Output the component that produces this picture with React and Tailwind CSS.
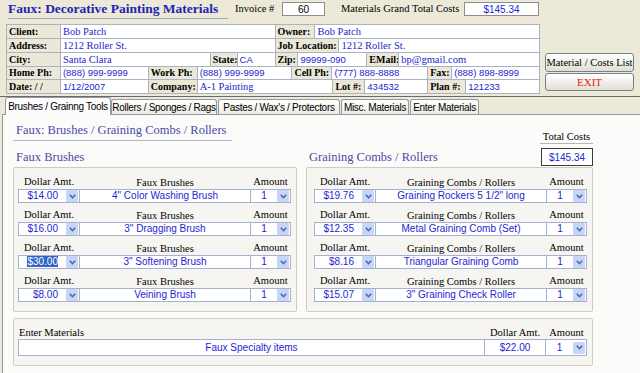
const SERIF = "font-['Liberation_Serif','Times_New_Roman',serif]";
const SANS = "font-['Liberation_Sans',Arial,sans-serif]";

const header = [
  [
    ["Client:", 54, "l"],
    ["Bob Patch", 215, "s"],
    ["Owner:", 40, "l"],
    ["Bob Patch", 225, "s"],
  ],
  [
    ["Address:", 54, "l"],
    ["1212 Roller St.", 215, "s"],
    ["Job Location:", 64, "l"],
    ["1212 Roller St.", 201, "s"],
  ],
  [
    ["City:", 54, "l"],
    ["Santa Clara", 150, "s"],
    ["State:", 27, "l"],
    ["CA", 38, "n"],
    ["Zip:", 23, "l"],
    ["99999-090", 69, "n"],
    ["EMail:", 32, "l"],
    ["bp@gmail.com", 141, "s"],
  ],
  [
    ["Home Ph:", 54, "l"],
    ["(888) 999-9999", 88, "n"],
    ["Work Ph:", 49, "l"],
    ["(888) 999-9999", 95, "n"],
    ["Cell Ph:", 40, "l"],
    ["(777) 888-8888", 96, "n"],
    ["Fax:", 24, "l"],
    ["(888) 898-8999", 88, "n"],
  ],
  [
    ["Date: / /", 54, "l"],
    ["1/12/2007", 88, "n"],
    ["Company:", 49, "l"],
    ["A-1 Painting", 136, "s"],
    ["Lot #:", 32, "l"],
    ["434532", 63, "n"],
    ["Plan #:", 38, "l"],
    ["121233", 74, "n"],
  ],
];

const rowHeights = ["h-[14px]", "h-[14px]", "h-[14px]", "h-[13px]", "h-[14px]"];

const brushes = [
  { dollar: "$14.00", name: "4\" Color Washing Brush" },
  { dollar: "$16.00", name: "3\" Dragging Brush" },
  { dollar: "$30.00", name: "3\" Softening Brush", selected: true },
  { dollar: "$8.00", name: "Veining Brush" },
];

const combs = [
  { dollar: "$19.76", name: "Graining Rockers 5 1/2\" long" },
  { dollar: "$12.35", name: "Metal Graining Comb (Set)" },
  { dollar: "$8.16", name: "Triangular Graining Comb" },
  { dollar: "$15.07", name: "3\" Graining Check Roller" },
];

const tabs = [
  { label: "Brushes / Grainng Tools", w: "w-[106px] ml-[5px]", active: true },
  { label: "Rollers / Sponges / Rags", w: "w-[106px]" },
  { label: "Pastes / Wax's / Protectors", w: "w-[122px] ml-px" },
  { label: "Misc. Materials", w: "w-[68px] ml-px" },
  { label: "Enter Materials", w: "w-[69px] ml-px" },
];

function DropBtn() {
  return (
    <span className="mr-px flex h-[12px] w-[12px] shrink-0 items-center justify-center rounded-[1px] bg-[#c6d5f8]">
      <svg width="7" height="5" viewBox="0 0 7 5">
        <path d="M0.8 0.8 L3.5 3.7 L6.2 0.8" fill="none" stroke="#4868a8" strokeWidth="1.6" />
      </svg>
    </span>
  );
}

function ItemRow({ label, item }) {
  return (
    <div>
      <div className={`flex h-[19px] items-end ${SERIF} text-[10.5px] leading-[12px] text-black`}>
        <div className="w-[62px] pb-px text-center">Dollar Amt.</div>
        <div className="w-[170px] text-center">{label}</div>
        <div className="w-[41px] pb-px text-center">Amount</div>
      </div>
      <div className={`flex h-[14px] ${SANS} text-[10px] leading-[12px] text-[#2525d5]`}>
        <div className="flex w-[62px] items-center border border-[#a3b3cd] bg-white">
          <span className="flex-1 pr-[8px] text-right">
            {item.selected ? <span className="bg-[#3163c8] text-white">{item.dollar}</span> : item.dollar}
          </span>
          <DropBtn />
        </div>
        <div className="flex w-[170px] items-center justify-center whitespace-nowrap border-y border-[#a3b3cd] bg-white">
          {item.name}
        </div>
        <div className="flex w-[41px] items-center border border-[#a3b3cd] bg-white">
          <span className="flex-1 text-center">1</span>
          <DropBtn />
        </div>
      </div>
    </div>
  );
}

export default function App() {
  return (
    <div className={`h-[373px] w-[640px] overflow-hidden bg-[#ece9d8] ${SERIF}`}>
      {/* Title bar */}
      <div className="flex h-[24px] items-start">
        <div className="ml-[8px] h-[19px] w-[220px] whitespace-nowrap border-b border-[#a9a9b4] text-[13.5px] font-bold leading-[18px] text-[#2323b3]">
          Faux: Decorative Painting Materials
        </div>
        <div className="w-[54px] whitespace-nowrap pl-[7px] pt-[3px] text-[10.5px] leading-[12px] text-black">Invoice #</div>
        <div className={`mt-[2px] flex h-[14px] w-[43px] items-center justify-center border border-[#8e8e8e] bg-white ${SANS} text-[10px] text-black`}>
          60
        </div>
        <div className="w-[139px] whitespace-nowrap pl-[16px] pt-[3px] text-[10.5px] leading-[12px] text-black">Materials Grand Total Costs</div>
        <div className={`mt-[2px] flex h-[14px] w-[75px] items-center justify-center border border-[#8e8e8e] bg-white ${SANS} text-[10px] text-[#2525d5]`}>
          $145.34
        </div>
      </div>

      {/* Client grid + buttons */}
      <div className="flex">
        <div className="ml-[6px] w-[534px] border-l border-t border-[#aab3c5]">
          {header.map((row, ri) => (
            <div key={ri} className={`flex ${rowHeights[ri]}`}>
              {row.map(([text, w, kind], ci) => (
                <div
                  key={ci}
                  style={{ width: w }}
                  className={`flex items-center overflow-hidden whitespace-nowrap border-b border-r border-[#aab3c5] ${
                    kind === "l"
                      ? "bg-[#ebe8d8] pl-[2px] text-[10px] font-bold text-black"
                      : kind === "s"
                      ? "bg-white pl-[2px] text-[10.5px] text-[#2525cc]"
                      : `bg-white pl-[2px] ${SANS} text-[9.5px] text-[#2525cc]`
                  } leading-[12px]`}
                >
                  {text}
                </div>
              ))}
            </div>
          ))}
        </div>
        <div className="ml-[5px] flex flex-col gap-px pt-[29px]">
          <button className="h-[19px] w-[89px] whitespace-nowrap rounded-[3px] border border-[#74808f] bg-gradient-to-b from-white to-[#e2dfd1] text-[10.5px] leading-[12px] text-black">
            Material / Costs List
          </button>
          <button className="h-[18px] w-[89px] rounded-[3px] border border-[#74808f] bg-gradient-to-b from-white to-[#e2dfd1] text-[11px] leading-[12px] text-[#e01818]">
            EXIT
          </button>
        </div>
      </div>

      <div className="h-[3px] border-b border-[#6a6a6a]" />

      {/* Tabs */}
      <div className={`flex h-[17px] items-end ${SANS} text-[10px] tracking-[-0.3px] text-black`}>
        {tabs.map((t) =>
          t.active ? (
            <div
              key={t.label}
              className={`${t.w} relative z-10 -mb-px flex h-[18px] items-center justify-center whitespace-nowrap rounded-t-[3px] border border-b-0 border-[#919b9c] bg-[#fcfcfd]`}
            >
              {t.label}
            </div>
          ) : (
            <div
              key={t.label}
              className={`${t.w} flex h-[15px] items-center justify-center whitespace-nowrap rounded-t-[3px] border border-b-0 border-[#919b9c] bg-gradient-to-b from-white to-[#eceae3]`}
            >
              {t.label}
            </div>
          )
        )}
      </div>

      {/* Tab page */}
      <div className="ml-[2px] h-[260px] border-l border-t border-[#919b9c] bg-[#fbfbf9] pl-[10px]">
        <div className="w-[580px]">
          <div className="flex h-[30px] items-start">
            <div className="mt-[7px] h-[19px] w-[219px] whitespace-nowrap border-b border-[#b4b4c2] pl-[3px] text-[12.5px] leading-[16px] text-[#4a4aa6]">
              Faux: Brushes / Graining Combs / Rollers
            </div>
            <div className="ml-auto mt-[15px] h-[14px] w-[53px] whitespace-nowrap border-b border-[#b4b4c2] text-center text-[10.5px] leading-[13px] text-black">
              Total Costs
            </div>
          </div>
          <div className="flex h-[22px]">
            <div className="w-[293px] whitespace-nowrap pl-[3px] pt-[4px] text-[12.5px] leading-[16px] text-[#4a4aa6]">Faux Brushes</div>
            <div className="flex flex-1 items-start">
              <div className="whitespace-nowrap pl-[3px] pt-[4px] text-[12.5px] leading-[16px] text-[#4a4aa6]">Graining Combs / Rollers</div>
              <div className={`ml-auto mt-[3px] flex h-[18px] w-[52px] items-center justify-center border border-[#3c3c3c] bg-white ${SANS} text-[10px] text-[#2525d5]`}>
                $145.34
              </div>
            </div>
          </div>

          <div className="flex gap-[9px]">
            <div className="h-[145px] w-[284px] rounded-[2px] border border-[#cfcdc0] bg-[#f6f5f1] pl-[4px] pt-[2px]">
              {brushes.map((b) => (
                <ItemRow key={b.name} label="Faux Brushes" item={b} />
              ))}
            </div>
            <div className="h-[145px] w-[287px] rounded-[2px] border border-[#cfcdc0] bg-[#f6f5f1] pl-[7px] pt-[2px]">
              {combs.map((c) => (
                <ItemRow key={c.name} label="Graining Combs / Rollers" item={c} />
              ))}
            </div>
          </div>

          <div className="mt-[6px] h-[48px] w-[580px] rounded-[2px] border border-[#cfcdc0] bg-[#f6f5f1] pl-[4px] pt-[8px]">
            <div className="flex h-[12px] items-end text-[10.5px] leading-[12px] text-black">
              <div className="w-[466px] pl-px">Enter Materials</div>
              <div className="w-[62px] text-center">Dollar Amt.</div>
              <div className="w-[41px] text-center">Amount</div>
            </div>
            <div className={`flex h-[17px] ${SANS} text-[10px] leading-[12px] text-[#2525d5]`}>
              <div className="flex w-[466px] items-center justify-center border-y border-l border-[#a3b3cd] bg-white">
                Faux Specialty items
              </div>
              <div className="flex w-[62px] items-center justify-center border border-[#a3b3cd] bg-white">$22.00</div>
              <div className="flex w-[41px] items-center border-y border-r border-[#a3b3cd] bg-white">
                <span className="flex-1 text-center">1</span>
                <DropBtn />
              </div>
            </div>
          </div>
        </div>
      </div>
    </div>
  );
}
